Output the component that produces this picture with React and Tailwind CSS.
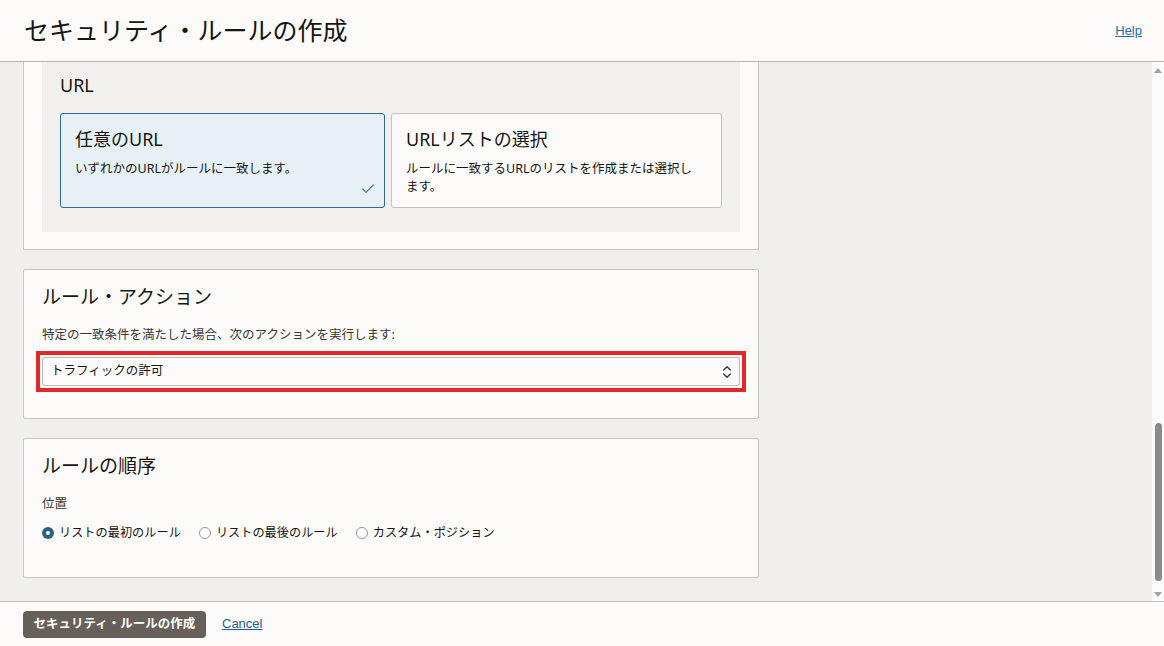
import { Check, ChevronsUpDown } from 'lucide-react'

const font = { fontFamily: '"Noto Sans", "Noto Sans CJK JP", sans-serif' }

function Radio({ checked, label }) {
  return (
    <label className="flex items-center gap-[5px] text-[12.2px] text-[#161513]">
      {checked ? (
        <span className="flex h-[12px] w-[12px] items-center justify-center rounded-full bg-[#2b6183]">
          <span className="h-[4px] w-[4px] rounded-full bg-white" />
        </span>
      ) : (
        <span className="h-[12px] w-[12px] rounded-full border border-[#9a9692] bg-white" />
      )}
      {label}
    </label>
  )
}

export default function App() {
  return (
    <div className="flex h-[646px] flex-col bg-[#fcfbfa] text-[#161513]" style={font}>
      <header className="flex h-[62px] shrink-0 items-center justify-between border-b border-[#b8b5b1] pl-[24px] pr-[22px]">
        <h1 className="text-[25px] leading-none">セキュリティ・ルールの作成</h1>
        <a href="#" className="text-[13px] text-[#1f6fa8] underline" style={{ fontFamily: '"Liberation Sans", sans-serif' }}>Help</a>
      </header>

      <div className="flex min-h-0 flex-1">
        <main className="flex flex-1 flex-col gap-[19px] overflow-hidden bg-[#f1efed] pl-[23px]">
          <section className="w-[736px] border-x border-b border-[#c9c6c2] bg-[#fcfbfa] px-[18px] pb-[17px]">
            <div className="bg-[#f1f0ee] px-[18px] pb-[24px] pt-[11px]">
              <h3 className="text-[18px] leading-[24px]">URL</h3>
              <div className="mt-[16px] flex gap-[6px]">
                <div className="relative h-[95px] w-[325px] rounded-[3px] border border-[#2e6a8e] bg-[#e7f0f5] px-[14px] pt-[13px]">
                  <div className="text-[18px] leading-[24px]">任意のURL</div>
                  <p className="mt-[9px] text-[12.5px] leading-[18px]">いずれかのURLがルールに一致します。</p>
                  <Check className="absolute bottom-[10px] right-[8px] h-[16px] w-[16px] text-[#4a7b98]" strokeWidth={1.6} />
                </div>
                <div className="h-[95px] w-[331px] rounded-[3px] border border-[#c4c1bd] bg-[#fcfbfa] px-[14px] pt-[13px]">
                  <div className="text-[18px] leading-[24px]">URLリストの選択</div>
                  <p className="mt-[9px] pr-[10px] text-[12.5px] leading-[18px]">ルールに一致するURLのリストを作成または選択します。</p>
                </div>
              </div>
            </div>
          </section>

          <section className="w-[736px] rounded-[2px] border border-[#c9c6c2] bg-[#fcfbfa] px-[18px] pb-[26px] pt-[14px]">
            <h2 className="text-[19px] leading-[26px]">ルール・アクション</h2>
            <p className="mt-[16px] text-[12.5px] leading-[18px] text-[#3a3734]">特定の一致条件を満たした場合、次のアクションを実行します:</p>
            <div className="-mx-[6px] mt-[7px] border-[4px] border-[#e3262b] p-[2px]">
              <div className="flex h-[29px] items-center justify-between rounded-[3px] border border-[#bcb8b4] bg-[#fcfbfa] pl-[8px] pr-[4px]">
                <span className="text-[12.5px]">トラフィックの許可</span>
                <ChevronsUpDown className="h-[16px] w-[16px] text-[#3a3734]" strokeWidth={2} />
              </div>
            </div>
          </section>

          <section className="w-[736px] rounded-[2px] border border-[#c9c6c2] bg-[#fcfbfa] px-[18px] pb-[35px] pt-[14px]">
            <h2 className="text-[19px] leading-[26px]">ルールの順序</h2>
            <p className="mt-[16px] text-[12.5px] leading-[18px] text-[#3a3734]">位置</p>
            <div className="mt-[11px] flex gap-[18px]">
              <Radio checked label="リストの最初のルール" />
              <Radio label="リストの最後のルール" />
              <Radio label="カスタム・ポジション" />
            </div>
          </section>
        </main>

        <div className="flex w-[12px] shrink-0 flex-col items-center bg-[#fbfbfb]">
          <div className="mt-[6px] h-0 w-0 border-x-[4px] border-b-[5px] border-x-transparent border-b-[#a3a3a3]" />
          <div className="flex-1" />
          <div className="h-[158px] w-[7px] rounded-full bg-[#8b8b8b]" />
          <div className="mb-[4px] mt-[11px] h-0 w-0 border-x-[4px] border-t-[5px] border-x-transparent border-t-[#a3a3a3]" />
        </div>
      </div>

      <footer className="flex h-[45px] shrink-0 items-center gap-[16px] border-t border-[#c4c1bd] bg-[#fcfbfa] pl-[23px]">
        <button className="h-[27px] w-[183px] rounded-[4px] bg-[#675f5a] text-[12.5px] font-semibold text-white">
          セキュリティ・ルールの作成
        </button>
        <a href="#" className="text-[13px] text-[#1f5f8f] underline" style={{ fontFamily: '"Liberation Sans", sans-serif' }}>Cancel</a>
      </footer>
    </div>
  )
}
